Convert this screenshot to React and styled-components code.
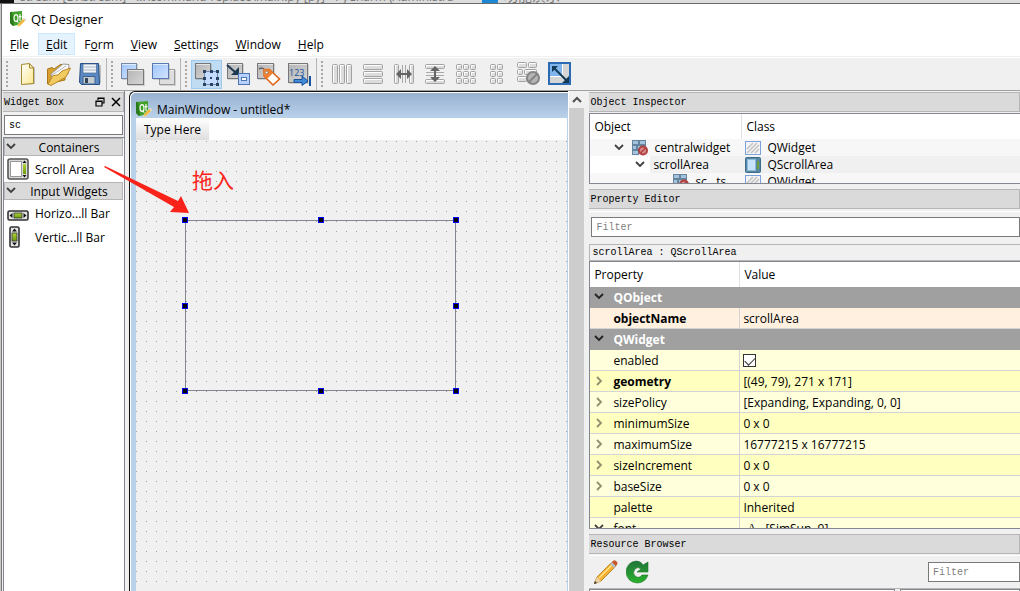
import styled, { createGlobalStyle } from 'styled-components';

const App = () => {
  return (
    <Desktop>
      <GlobalStyle />
      <BackStrip>
        <BackIcon />
        <BackTitle>stream [D:\stream] - ...\command-replace\main.py [py] - PyCharm (Administra</BackTitle>
        <BackTab />
        <BackText>功能演示</BackText>
      </BackStrip>
      <Window>
        <TitleBar>
          <QtLogo />
          <span>Qt Designer</span>
        </TitleBar>
        <MenuBar>
          {menus.map(([before, key, after]) => (
            <MenuButton key={key + after} $active={key + after === 'Edit'}>
              {before}<u>{key}</u>{after}
            </MenuButton>
          ))}
        </MenuBar>
        <ToolBar>
          {toolGroups.map((group, index) => (
            <ToolGroup key={index}>
              <Handle />
              {group.map(({ name, icon, active }) => (
                <ToolButton key={name} aria-label={name} $active={active}>
                  <svg width="24" height="24" viewBox="0 0 24 24">{icon}</svg>
                </ToolButton>
              ))}
            </ToolGroup>
          ))}
        </ToolBar>
        <Body>
          <WidgetBox />
          <Workspace />
          <RightDock>
            <ObjectInspector />
            <PropertyEditor />
            <ResourceBrowser />
          </RightDock>
        </Body>
      </Window>
    </Desktop>
  )
}

export default App;


const QtLogo = () => (
  <svg width="16" height="16" viewBox="0 0 16 16">
    <path d="M0 1 L12 0 V13 L3 15 L0 12 Z" fill="#43a12b" />
    <path d="M0 1 L2 1 L4 14 L3 15 L0 12 Z" fill="#2c7a1d" />
    <ellipse cx="6" cy="7" rx="2" ry="3.4" fill="none" stroke="#fff" strokeWidth="1.1" />
    <path d="M7 10 L8.3 11.6 M10 3 V10 M8.8 5.6 H11.4" stroke="#fff" strokeWidth="1.1" fill="none" />
    <path d="M14 7 L16 9 L10 15 L7.5 15.5 L8.4 13 Z" fill="#f2b63a" stroke="#fff3c4" strokeWidth=".5" />
    <path d="M14 7 L16 9 L15 10 L13 8 Z" fill="#d9dbe0" />
  </svg>
)

const Chevron = ({ closed, color = '#404040' }) => (
  <svg width="10" height="10" viewBox="0 0 10 10">
    <path d={closed ? 'M3 1 L7 5 L3 9' : 'M1 2 L5 6 L9 2'} fill="none" stroke={color} strokeWidth="1.8" />
  </svg>
)

const Box = ({ x, y, w = 16, h = 16, fill = 'url(#grayFill)', stroke = '#777' }) => (
  <g>
    <rect x={x + 1} y={y + 1} width={w} height={h} fill="#0002" />
    <rect x={x + 0.5} y={y + 0.5} width={w - 1} height={h - 1} fill={fill} stroke={stroke} />
    <path d={`M${x + 1} ${y + 1.5} H${x + w - 1}`} stroke="#fff9" />
  </g>
)

const Bars = ({ list }) => list.map(([x, y, w, h]) => (
  <g key={`${x}-${y}`}>
    <rect x={x + 0.5} y={y + 0.5} width={w - 1} height={h - 1} rx="1" fill="#dcdcdc" stroke="#a3a3a3" />
    <path d={`M${x + 1.5} ${y + h - 1.5} V${y + 1.5} H${x + w - 1.5}`} fill="none" stroke="#fff" />
  </g>
))

const Gradients = () => (
  <defs>
    <linearGradient id="grayFill" x1="0" y1="0" x2="1" y2="1">
      <stop offset="0" stopColor="#b4b4b4" />
      <stop offset="1" stopColor="#d6d6d6" />
    </linearGradient>
    <linearGradient id="blueFill" x1="0" y1="0" x2="1" y2="1">
      <stop offset="0" stopColor="#9fc4fa" />
      <stop offset="1" stopColor="#d2e4ff" />
    </linearGradient>
    <linearGradient id="pageFill" x1="0" y1="0" x2="1" y2="1">
      <stop offset="0" stopColor="#fff" />
      <stop offset="1" stopColor="#fbe88e" />
    </linearGradient>
    <linearGradient id="greenFill" x1="0" y1="0" x2="0" y2="1">
      <stop offset="0" stopColor="#b2d63a" />
      <stop offset="1" stopColor="#6a9a0c" />
    </linearGradient>
    <linearGradient id="reloadFill" x1="0" y1="0" x2="0" y2="1">
      <stop offset="0" stopColor="#22733a" />
      <stop offset="1" stopColor="#27b32c" />
    </linearGradient>
  </defs>
)

const grid = (xs, ys, w, h) => ys.flatMap((y) => xs.map((x) => [x, y, w, h]))

const menus = [
  ['', 'F', 'ile'],
  ['', 'E', 'dit'],
  ['F', 'o', 'rm'],
  ['', 'V', 'iew'],
  ['', 'S', 'ettings'],
  ['', 'W', 'indow'],
  ['', 'H', 'elp'],
]

const toolGroups = [
  [
    {
      name: 'New',
      icon: <>
        <Gradients />
        <path d="M6 3 L14 2 L19 6 V22 L7 23 Z" fill="#0003" />
        <path d="M5.5 2.5 L13.5 1.5 L17.5 6 V21.5 L5.5 22.5 Z" fill="url(#pageFill)" stroke="#a58a2c" />
        <path d="M13.5 1.5 V6 H17.5 Z" fill="#fff8d0" stroke="#a58a2c" />
      </>
    },
    {
      name: 'Open',
      icon: <>
        <path d="M0.5 22 V7 L5 5.5 L7 7 L14 2 L18 6 V18 Z" fill="#d9a030" stroke="#a8781c" />
        <path d="M4 12 L16 2 L22 2.5 L21 12 L6 21 Z" fill="#fafafa" stroke="#999" />
        <path d="M5 13 L19 4" stroke="#bbb" />
        <path d="M1 22 L6 13.5 L11 13 L15 9 L23.5 6 L19 15 L4 23.5 Z" fill="#f2ca62" stroke="#b98722" />
      </>
    },
    {
      name: 'Save',
      icon: <>
        <path d="M5 3 H23 V21 L20 23 H3 Z" fill="#0003" />
        <path d="M2.5 1.5 H20.5 L21.5 22.5 H3.5 L1.5 20.5 Z" fill="#5b8ac4" stroke="#244d80" />
        <path d="M5 2 H18.5 V11 H5 Z" fill="#f2f3f5" stroke="#42699a" strokeWidth=".7" />
        <path d="M6 5 H18 M6 8 H18" stroke="#a9b7c8" />
        <path d="M5 14.5 H17 V22 H5 Z" fill="#c7ccd1" stroke="#3b618f" />
        <path d="M7 16 H10 V21 H7 Z" fill="#344558" />
      </>
    },
  ],
  [
    {
      name: 'Send to Back',
      icon: <>
        <Box x={0} y={1} fill="url(#blueFill)" stroke="#7688a5" />
        <Box x={6} y={7} w={17} />
      </>
    },
    {
      name: 'Bring to Front',
      icon: <>
        <Box x={7} y={7} fill="#dedede" stroke="#999" />
        <Box x={0} y={1} w={17} fill="url(#blueFill)" stroke="#577bb1" />
      </>
    },
  ],
  [
    {
      name: 'Edit Widgets',
      active: true,
      icon: <>
        <Box x={0} y={1} />
        <rect x="9.5" y="9.5" width="13" height="13" fill="#c4dcff" stroke="#6f8cb4" />
        {grid([8, 15, 21], [8, 15, 21], 3, 3).filter(([x, y]) => x !== 15 || y !== 15).map(([x, y]) => (
          <rect key={`${x}${y}`} x={x} y={y} width="3" height="3" fill="#2b4260" />
        ))}
        <rect x="15" y="15" width="2" height="2" fill="#2b4260" />
      </>
    },
    {
      name: 'Edit Signals/Slots',
      icon: <>
        <Box x={1} y={1} />
        <path d="M1 3 L9 10" stroke="#1d3851" strokeWidth="2" />
        <path d="M13 5 V13 L5 13 Z" fill="#1d3851" />
        <rect x="12.5" y="11.5" width="11" height="11" fill="#b6d1fb" stroke="#4c73b5" />
        <rect x="15.5" y="15.5" width="5" height="3" fill="#fff" stroke="#5175b0" />
      </>
    },
    {
      name: 'Edit Buddies',
      icon: <>
        <Box x={0} y={1} w={17} />
        <path d="M2 7 Q6 4 9 10" fill="none" stroke="#333" />
        <path d="M7 7.5 H12.5 L22.5 17 L16 23 L7 14 Z" fill="#fff" stroke="#e0681c" strokeWidth="1.6" />
        <path d="M7 7.5 H12.5 L16 11 L10 17 L7 14 Z" fill="#ef8131" />
        <circle cx="9.5" cy="10.5" r="1.3" fill="#fff" stroke="#555" strokeWidth=".5" />
      </>
    },
    {
      name: 'Edit Tab Order',
      icon: <>
        <Box x={0} y={1} w={20} h={20} />
        <text x="1" y="14" fontSize="9" fontFamily="Open Sans, sans-serif" fill="#15509b">123</text>
        <path d="M6 17.5 H14 V14 L20 19 L14 23.5 V20.5 H6 Z" fill="#4289d8" stroke="#18539b" />
        <path d="M22 14 V24" stroke="#18539b" strokeWidth="2" />
      </>
    },
  ],
  [
    { name: 'Lay Out Horizontally', icon: <Bars list={grid([1, 8, 15], [2], 6, 20)} /> },
    { name: 'Lay Out Vertically', icon: <Bars list={grid([1], [2, 9, 16], 20, 6)} /> },
    {
      name: 'Horizontal Splitter',
      icon: <>
        <Bars list={grid([1, 16], [2], 5, 20)} />
        <path d="M9.5 3 V21 M12.5 3 V21" stroke="#a8a8a8" />
        <path d="M3 12 L8 7 V11 H14 V7 L19 12 L14 17 V13 H8 V17 Z" fill="#646464" />
      </>
    },
    {
      name: 'Vertical Splitter',
      icon: <>
        <Bars list={grid([1], [2, 17], 20, 5)} />
        <path d="M2 10.5 H20 M2 13.5 H20" stroke="#a8a8a8" />
        <path d="M11 4 L16 9 H12 V15 H16 L11 20 L6 15 H10 V9 H6 Z" fill="#646464" />
      </>
    },
    { name: 'Grid Layout', icon: <Bars list={grid([1, 8, 15], [2, 9, 16], 6, 6)} /> },
    { name: 'Form Layout', icon: <Bars list={grid([4, 11], [2, 9, 16], 6, 6)} /> },
    {
      name: 'Break Layout',
      icon: <>
        <Bars list={[[0, 0, 10, 6], [11, 0, 9, 6], [0, 7, 6, 6], [7, 7, 13, 6], [0, 14, 10, 6]]} />
        <circle cx="16" cy="16" r="6" fill="#b4b4b4" stroke="#858585" strokeWidth="2" />
        <path d="M12 20 L20 12" stroke="#858585" strokeWidth="2" />
      </>
    },
    {
      name: 'Adjust Size',
      icon: <>
        <rect x="1" y="1" width="21" height="21" fill="#d5d5d5" stroke="#2a6ab2" strokeWidth="2" />
        <rect x="2" y="2" width="12" height="12" fill="#7fb5ec" />
        <path d="M14.5 2 V14.5 H2" stroke="#fff" fill="none" />
        <path d="M6 6 L18 18" stroke="#123a57" strokeWidth="2" />
        <path d="M4 4 H10 L4 10 Z M21 21 V14 L14 21 Z" fill="#123a57" />
      </>
    },
  ],
]

const WidgetBox = () => (
  <LeftDock>
    <DockTitle>
      Widget Box
      <DockActions>
        <DockButton aria-label="Float">
          <svg width="10" height="10" viewBox="0 0 10 10">
            <path d="M3 3 V1 H9 V6 H7 M1 4 H7 V9 H1 Z M3 1.5 H9 M1 4.5 H7" fill="none" stroke="#000" strokeWidth="1.2" />
          </svg>
        </DockButton>
        <DockButton aria-label="Close">
          <svg width="10" height="10" viewBox="0 0 10 10">
            <path d="M1 1 L9 9 M9 1 L1 9" stroke="#000" strokeWidth="1.5" />
          </svg>
        </DockButton>
      </DockActions>
    </DockTitle>
    <SearchBox>
      <TextInput aria-label="Search widgets" defaultValue="sc" />
    </SearchBox>
    <WidgetList>
      <Category><Chevron /><span>Containers</span></Category>
      <WidgetItem $tall>
        <svg width="22" height="22" viewBox="0 0 22 22">
          <rect x="1" y="1" width="20" height="20" rx="2" fill="#d9d9d9" stroke="#555" strokeWidth="1.6" />
          <rect x="3.5" y="3.5" width="11" height="15" fill="#fff" stroke="#999" />
          <rect x="16" y="6" width="3" height="10" fill="url(#greenFill)" />
          <path d="M15.5 5 L17.5 2.5 L19.5 5 Z M15.5 17 L17.5 19.5 L19.5 17 Z" fill="#111" />
        </svg>
        Scroll Area
      </WidgetItem>
      <Category><Chevron /><span>Input Widgets</span></Category>
      <WidgetGroup>
        <WidgetItem>
          <svg width="22" height="22" viewBox="0 0 22 22">
            <rect x="1" y="9" width="20" height="9" rx="1.5" fill="#e5e5e5" stroke="#333" strokeWidth="1.6" />
            <rect x="7" y="11" width="8" height="5" fill="url(#greenFill)" stroke="#333" strokeWidth=".8" />
            <path d="M5.5 11 L2.5 13.5 L5.5 16 Z M16.5 11 L19.5 13.5 L16.5 16 Z" fill="#111" />
          </svg>
          Horizo...ll Bar
        </WidgetItem>
        <WidgetItem>
          <svg width="22" height="22" viewBox="0 0 22 22">
            <rect x="3" y="1" width="9" height="20" rx="1.5" fill="#e5e5e5" stroke="#333" strokeWidth="1.6" />
            <rect x="5" y="7" width="5" height="8" fill="url(#greenFill)" stroke="#333" strokeWidth=".8" />
            <path d="M5 5.5 L7.5 2.5 L10 5.5 Z M5 16.5 L7.5 19.5 L10 16.5 Z" fill="#111" />
          </svg>
          Vertic...ll Bar
        </WidgetItem>
      </WidgetGroup>
    </WidgetList>
    <Arrow width="90" height="54" viewBox="0 0 90 54">
      <path d="M1 1 L0 2 L70 42 L66 47 L85 48 L77 31 L74 36 Z" fill="#f9231a" />
    </Arrow>
  </LeftDock>
)

const Workspace = () => (
  <Mdi>
    <FormWindow>
      <FormTitle>
        <QtLogo />
        <span>MainWindow - untitled*</span>
      </FormTitle>
      <FormMenu>
        <TypeHere>Type Here</TypeHere>
      </FormMenu>
      <Canvas>
        <Note>拖入</Note>
        <ScrollAreaFrame>
          {[0, 50, 100].flatMap((top) => [0, 50, 100].map((left) => (
            (top !== 50 || left !== 50) && <Grip key={`${top}-${left}`} $top={top} $left={left} />
          )))}
        </ScrollAreaFrame>
      </Canvas>
    </FormWindow>
    <ScrollTrack>
      <ScrollUp aria-label="Scroll up">
        <svg width="10" height="10" viewBox="0 0 10 10">
          <path d="M1 7 L5 3 L9 7" fill="none" stroke="#505050" strokeWidth="2" />
        </svg>
      </ScrollUp>
      <ScrollThumb />
    </ScrollTrack>
  </Mdi>
)

const BrokenLayout = () => (
  <svg width="16" height="16" viewBox="0 0 16 16">
    {[[0, 0, 7, 5], [7, 0, 7, 5], [0, 5, 5, 5], [5, 5, 9, 5], [0, 10, 7, 5]].map(([x, y, w, h]) => (
      <rect key={`${x}-${y}`} x={x + 0.5} y={y + 0.5} width={w - 1} height={h - 1} fill="#a3c3de" stroke="#65859f" />
    ))}
    <circle cx="11" cy="10.5" r="4" fill="#d98c8c" stroke="#b04040" strokeWidth="2" />
    <path d="M8 13.5 L14 7.5" stroke="#b04040" strokeWidth="1.6" />
  </svg>
)

const WidgetIcon = () => (
  <svg width="16" height="16" viewBox="0 0 16 16">
    <rect x=".5" y="1.5" width="15" height="13" fill="#f4f4f4" stroke="#7ba2dd" />
    <path d="M2 9 L8 3 M2 13 L12 3 M6 13 L14 5 M10 13 L14 9" stroke="#c4c4c4" strokeWidth="1.6" />
  </svg>
)

const ScrollIcon = () => (
  <svg width="16" height="16" viewBox="0 0 16 16">
    <rect x=".5" y=".5" width="15" height="15" rx="1" fill="#5687a5" stroke="#3e6d8c" />
    <rect x="2.5" y="2.5" width="8" height="11" fill="#c5e4fb" stroke="#8eb9d8" />
    <rect x="12" y="4" width="2" height="8" fill="#6f9f3c" />
  </svg>
)

const objects = [
  { depth: 0, name: 'centralwidget', type: 'QWidget' },
  { depth: 1, name: 'scrollArea', type: 'QScrollArea', selected: true },
  { depth: 2, name: 'sc...ts', type: 'QWidget' },
]

const ObjectInspector = () => (
  <section>
    <DockTitle>Object Inspector</DockTitle>
    <TreeFrame $height={71}>
      <Tree $first={151}>
        <thead>
          <tr><th>Object</th><th>Class</th></tr>
        </thead>
        <tbody>
          {objects.map(({ depth, name, type, selected }) => (
            <ObjectRow key={name} $selected={selected}>
              <td>
                <ObjectCell $depth={depth}>
                  {depth < 2 && <Chevron />}
                  {!selected && <BrokenLayout />}
                  {name}
                </ObjectCell>
              </td>
              <td>
                <ClassCell>
                  {selected ? <ScrollIcon /> : <WidgetIcon />}
                  {type}
                </ClassCell>
              </td>
            </ObjectRow>
          ))}
        </tbody>
      </Tree>
    </TreeFrame>
  </section>
)

const properties = [
  { group: 'QObject' },
  { name: 'objectName', value: 'scrollArea', bold: true, color: '#fff0e0' },
  { group: 'QWidget' },
  { name: 'enabled', check: true, color: '#ffffdc' },
  { name: 'geometry', value: '[(49, 79), 271 x 171]', bold: true, nested: true, color: '#ffffbf' },
  { name: 'sizePolicy', value: '[Expanding, Expanding, 0, 0]', nested: true, color: '#ffffdc' },
  { name: 'minimumSize', value: '0 x 0', nested: true, color: '#ffffbf' },
  { name: 'maximumSize', value: '16777215 x 16777215', nested: true, color: '#ffffdc' },
  { name: 'sizeIncrement', value: '0 x 0', nested: true, color: '#ffffbf' },
  { name: 'baseSize', value: '0 x 0', nested: true, color: '#ffffdc' },
  { name: 'palette', value: 'Inherited', color: '#ffffbf' },
  { name: 'font', value: '[SimSun, 9]', open: true, color: '#ffffdc' },
]

const PropertyEditor = () => (
  <PropertySection>
    <DockTitle>Property Editor</DockTitle>
    <FilterBar>
      <TextInput aria-label="Filter properties" placeholder="Filter" />
    </FilterBar>
    <ObjectLabel>scrollArea : QScrollArea</ObjectLabel>
    <TreeFrame $grow>
      <Tree $first={149}>
        <thead>
          <tr><th>Property</th><th>Value</th></tr>
        </thead>
        <tbody>
          {properties.map(({ group, name, value, bold, nested, open, check, color }) => (
            group ? (
              <GroupRow key={group}>
                <td colSpan="2"><PropertyName><Chevron color="#222" />{group}</PropertyName></td>
              </GroupRow>
            ) : (
              <PropertyRow key={name} $color={color} $bold={bold}>
                <td>
                  <PropertyName>
                    {nested || open ? <Chevron closed={nested} color={nested ? '#8f8f70' : '#404040'} /> : <Blank />}
                    {check ? <label htmlFor={name}>{name}</label> : <span>{name}</span>}
                  </PropertyName>
                </td>
                <td>
                  <PropertyValue>
                    {check && <CheckBox id={name} type="checkbox" defaultChecked />}
                    {open && <FontSample>A</FontSample>}
                    {value}
                  </PropertyValue>
                </td>
              </PropertyRow>
            )
          ))}
        </tbody>
      </Tree>
    </TreeFrame>
  </PropertySection>
)

const ResourceBrowser = () => (
  <section>
    <DockTitle>Resource Browser</DockTitle>
    <ResourceBar>
      <IconButton aria-label="Edit Resources">
        <svg width="24" height="24" viewBox="0 0 24 24">
          <path d="M0 24 L3 17 L18 2 L22 6 L7 21 Z" fill="#f4b130" stroke="#a9731a" strokeWidth=".8" />
          <path d="M5 18 L19 4" stroke="#ffe28c" strokeWidth="1.5" />
          <path d="M0 24 L3 17 L7 21 Z" fill="#efd2a3" />
          <path d="M0 24 L1 21 L3 23 Z" fill="#333" />
          <path d="M16 4 L18 2 L22 6 L20 8 Z" fill="#b9bcc0" />
          <path d="M18 2 Q20 -1 22 1 Q25 3 22 6 Z" fill="#c8582c" />
        </svg>
      </IconButton>
      <IconButton aria-label="Reload">
        <svg width="24" height="24" viewBox="0 0 24 24">
          <path d="M17 5 L22 2 V12 H11 L15 9 Q12 6 9 9 Q6 13 9 16 Q13 19 16 15 H22 Q19 23 11 23 Q1 22 0 12 Q1 2 10 1 Q15 1 17 5 Z" fill="url(#reloadFill)" stroke="#1f7529" strokeWidth=".6" />
        </svg>
      </IconButton>
      <ResourceFilter>
        <TextInput aria-label="Filter resources" placeholder="Filter" />
      </ResourceFilter>
    </ResourceBar>
    <ResourcePanes>
      <Pane $wide />
      <Pane />
    </ResourcePanes>
  </section>
)


const GlobalStyle = createGlobalStyle`
  * {
    box-sizing: border-box;
  }

  body {
    margin: 0;
    overflow: hidden;
    font-family: "Open Sans", "Noto Sans CJK SC", sans-serif;
    font-size: 12px;
    color: #000;
  }

  button, input {
    font: inherit;
    color: inherit;
    margin: 0;
  }

  svg {
    display: block;
    flex: none;
  }
`

const Desktop = styled.div`
  display: flex;
  flex-direction: column;
  height: 100vh;
  background: #c9c9c9;
`

const BackStrip = styled.div`
  display: flex;
  align-items: flex-end;
  height: 4px;
  overflow: hidden;
  background: #dcdcdc;
  border-bottom: 1px solid #6b6b6b;
`

const BackIcon = styled.span`
  width: 14px;
  height: 3px;
  margin-right: 6px;
  background: #111;
`

const BackTitle = styled.span`
  width: 456px;
  line-height: 12px;
  color: #777;
  white-space: nowrap;
`

const BackTab = styled.span`
  width: 16px;
  height: 3px;
  margin: 0 6px;
  background: #1c87d2;
`

const BackText = styled.span`
  font-size: 14px;
  line-height: 14px;
  color: #777;
`

const Window = styled.div`
  display: flex;
  flex-direction: column;
  flex: 1;
  min-height: 0;
  margin-left: 1px;
  border-left: 1px solid #777;
  background: #f0f0f0;
`

const TitleBar = styled.header`
  display: flex;
  align-items: center;
  gap: 5px;
  height: 29px;
  padding-left: 8px;
  background: #fff;
  font-size: 13px;
`

const MenuBar = styled.nav`
  display: flex;
  gap: 1px;
  height: 24px;
  padding-bottom: 1px;
  background: #fff;
  border-bottom: 1px solid #f0f0f0;
`

const MenuButton = styled.button`
  padding: 0 7px;
  border: 1px solid ${({ $active }) => ($active ? '#cce8ff' : 'transparent')};
  background: ${({ $active }) => ($active ? '#e5f3ff' : 'none')};
`

const ToolBar = styled.div`
  display: flex;
  height: 34px;
  border-bottom: 1px solid #a0a0a0;
  border-top: 1px solid #fff;
`

const ToolGroup = styled.div`
  display: flex;
  align-items: center;
  padding-right: 1px;
  border-right: 1px solid #b5b5b5;

  &:last-child {
    border-right: none;
  }
`

const Handle = styled.span`
  width: 2px;
  height: 26px;
  margin: 0 4px;
  background: repeating-linear-gradient(#a8a8a8 0 2px, transparent 2px 4px);
`

const ToolButton = styled.button`
  display: flex;
  align-items: center;
  justify-content: center;
  width: 31px;
  height: 29px;
  padding: 0;
  border: 1px solid ${({ $active }) => ($active ? '#9ccbef' : 'transparent')};
  background: ${({ $active }) => ($active ? '#c0dcf3' : 'none')};
`

const Body = styled.main`
  display: flex;
  flex: 1;
  min-height: 0;
`

const LeftDock = styled.aside`
  position: relative;
  display: flex;
  flex-direction: column;
  flex: none;
  width: 123px;
  padding: 1px 0 0 1px;
  border-right: 1px solid #828790;
`

const DockTitle = styled.div`
  display: flex;
  align-items: center;
  justify-content: space-between;
  height: 20px;
  padding-left: 1px;
  border: 1px solid #b6b6b6;
  border-left: none;
  background: #dadada;
  font-family: "Liberation Mono", monospace;
  font-size: 10px;
  white-space: nowrap;
`

const DockActions = styled.span`
  display: flex;
  gap: 6px;
  padding-right: 2px;
`

const DockButton = styled.button`
  padding: 0;
  border: none;
  background: none;
`

const SearchBox = styled.div`
  padding: 3px 1px 2px;
`

const TextInput = styled.input`
  display: block;
  width: 100%;
  height: 20px;
  padding: 0 4px;
  border: 1px solid #7a7a7a;
  border-radius: 0;
  outline: none;
  background: #fff;
  font-family: "Liberation Mono", monospace;
  font-size: 10px;

  &::placeholder {
    color: #808080;
  }
`

const WidgetList = styled.div`
  flex: 1;
  border-top: 1px solid #828790;
  border-left: 1px solid #828790;
  background: #fff;
`

const Category = styled.div`
  display: flex;
  align-items: center;
  height: 18px;
  padding-left: 1px;
  margin-right: 1px;
  border: 1px solid #b6b6b6;
  background: #dadada;

  span {
    flex: 1;
    text-align: center;
  }
`

const WidgetGroup = styled.div`
  padding-top: 1px;
`

const WidgetItem = styled.div`
  display: flex;
  align-items: center;
  gap: 6px;
  height: ${({ $tall }) => ($tall ? 26 : 24)}px;
  padding-left: 3px;
`

const Arrow = styled.svg`
  position: absolute;
  top: 74px;
  left: 102px;
  z-index: 2;
`

const Mdi = styled.section`
  display: flex;
  flex: 1;
  min-width: 0;
  padding-left: 4px;
`

const FormWindow = styled.div`
  display: flex;
  flex-direction: column;
  flex: 1;
  min-width: 0;
  border: solid #111;
  border-width: 1px 0 0 1px;
  border-top-left-radius: 6px;
  background: #bad1ea;
  box-shadow: inset 1px 1px #fff;
  padding: 1px 1px 0 6px;
`

const FormTitle = styled.div`
  display: flex;
  align-items: center;
  gap: 5px;
  height: 25px;
  padding-top: 7px;
  margin: 0 -1px 0 -5px;
  padding-left: 5px;
  border-top-left-radius: 5px;
  background: linear-gradient(#97b1cf, #bad1ea);
`

const FormMenu = styled.div`
  height: 22px;
  background: #fff;
`

const TypeHere = styled.button`
  height: 22px;
  padding: 0 8px;
  border: none;
  background: linear-gradient(#fff, #dedede);
`

const Canvas = styled.div`
  position: relative;
  flex: 1;
  background: radial-gradient(circle at 0 0, #a0a0a0 1px, transparent 1px) 0 1px / 10px 10px #f0f0f0;
`

const Note = styled.span`
  position: absolute;
  top: 25px;
  left: 56px;
  font-size: 21px;
  line-height: 30px;
  color: #f9231a;
`

const ScrollAreaFrame = styled.div`
  position: absolute;
  top: 80px;
  left: 49px;
  width: 271px;
  height: 171px;
  box-shadow: inset 0 0 0 1px #828790;
`

const Grip = styled.span`
  position: absolute;
  top: ${({ $top }) => $top}%;
  left: ${({ $left }) => $left}%;
  width: 6px;
  height: 6px;
  margin: -3px;
  border: 1px solid #00f;
  background: #000;
`

const ScrollTrack = styled.div`
  display: flex;
  flex-direction: column;
  width: 16px;
  margin-right: 5px;
  border-left: 1px solid #fff;
`

const ScrollUp = styled.button`
  display: flex;
  align-items: center;
  justify-content: center;
  height: 17px;
  padding: 0;
  border: none;
  background: none;
`

const ScrollThumb = styled.div`
  flex: 1;
  background: #cdcdcd;
`

const RightDock = styled.aside`
  display: flex;
  flex-direction: column;
  gap: 5px;
  flex: none;
  width: 42.3%;
  padding-top: 1px;
`

const TreeFrame = styled.div`
  height: ${({ $height }) => ($height ? `${$height}px` : 'auto')};
  flex: ${({ $grow }) => ($grow ? 1 : 'none')};
  min-height: 0;
  margin-top: ${({ $grow }) => ($grow ? 0 : 1)}px;
  overflow: hidden;
  border: 1px solid #828790;
  border-right: none;
  background: #fff;
`

const Tree = styled.table`
  width: 100%;
  table-layout: fixed;
  border-spacing: 0;

  th {
    height: 25px;
    padding: 0 4px;
    font-weight: 400;
    text-align: left;
  }

  th:first-child {
    width: ${({ $first }) => $first}px;
  }

  th + th {
    border-left: 1px solid #e0e0e0;
  }

  td {
    padding: 0;
    white-space: nowrap;
  }
`

const ObjectRow = styled.tr`
  background: ${({ $selected }) => ($selected ? '#f0f0f0' : '#f7f7f7')};
  line-height: 17px;

  td {
    height: 17px;
  }

  td:first-child {
    background: linear-gradient(to right, #fff ${({ $selected }) => ($selected ? 60 : 0)}px, transparent 0);
  }
`

const ObjectCell = styled.div`
  display: flex;
  align-items: center;
  gap: ${({ $depth }) => ($depth === 1 ? 8 : 6)}px;
  height: 17px;
  padding-left: ${({ $depth }) => [24, 45, 83][$depth]}px;

  svg + svg {
    margin-left: 2px;
  }
`

const ClassCell = styled.div`
  display: flex;
  align-items: center;
  gap: 6px;
  height: 17px;
  padding-left: 4px;
`

const PropertySection = styled.section`
  display: flex;
  flex-direction: column;
  flex: 1;
  min-height: 0;
`

const FilterBar = styled.div`
  margin-top: 2px;
  padding: 5px 0 7px 2px;
  border-top: 1px solid #fff;
`

const ObjectLabel = styled.div`
  height: 17px;
  padding-left: 2px;
  border: 1px solid #b6b6b6;
  border-right: none;
  font-family: "Liberation Mono", monospace;
  font-size: 10px;
  line-height: 15px;
`

const GroupRow = styled.tr`
  background: #a0a0a0;
  color: #fff;
  font-weight: 700;

  td {
    height: 21px;
    border-bottom: 1px solid #a0a0a0;
  }
`

const PropertyRow = styled.tr`
  background: ${({ $color }) => $color};

  td {
    height: 21px;
    border-bottom: 1px solid #d4d4d4;
  }

  td + td {
    border-left: 1px solid #d4d4d4;
  }

  td:first-child {
    font-weight: ${({ $bold }) => ($bold ? 700 : 400)};
  }
`

const PropertyName = styled.div`
  display: flex;
  align-items: center;
  gap: 9px;
  height: 20px;
  padding-left: 4px;
`

const Blank = styled.i`
  width: 10px;
`

const PropertyValue = styled.div`
  display: flex;
  align-items: center;
  height: 20px;
  padding-left: 3px;
`

const CheckBox = styled.input`
  appearance: none;
  width: 13px;
  height: 13px;
  border: 1px solid #333;
  background: #fff;

  &:checked::before {
    content: "";
    display: block;
    width: 9px;
    height: 5px;
    margin: 2px 1px;
    border: solid #333;
    border-width: 0 0 1px 1px;
    transform: rotate(-45deg);
  }
`

const FontSample = styled.span`
  width: 22px;
  padding-left: 4px;
  font-family: "Liberation Serif", serif;
`

const ResourceBar = styled.div`
  display: flex;
  align-items: center;
  gap: 8px;
  height: 33px;
  margin-top: 1px;
  padding-left: 5px;
  border-top: 1px solid #fff;
`

const IconButton = styled.button`
  padding: 0;
  border: none;
  background: none;
`

const ResourceFilter = styled.div`
  width: 92px;
  margin-left: auto;
`

const ResourcePanes = styled.div`
  display: flex;
  gap: 5px;
  height: 3px;
  border-top: 1px solid #b6b6b6;
`

const Pane = styled.div`
  flex: ${({ $wide }) => ($wide ? 18 : 7)};
  border: 1px solid #828790;
  border-bottom: none;
  background: #fff;
`
